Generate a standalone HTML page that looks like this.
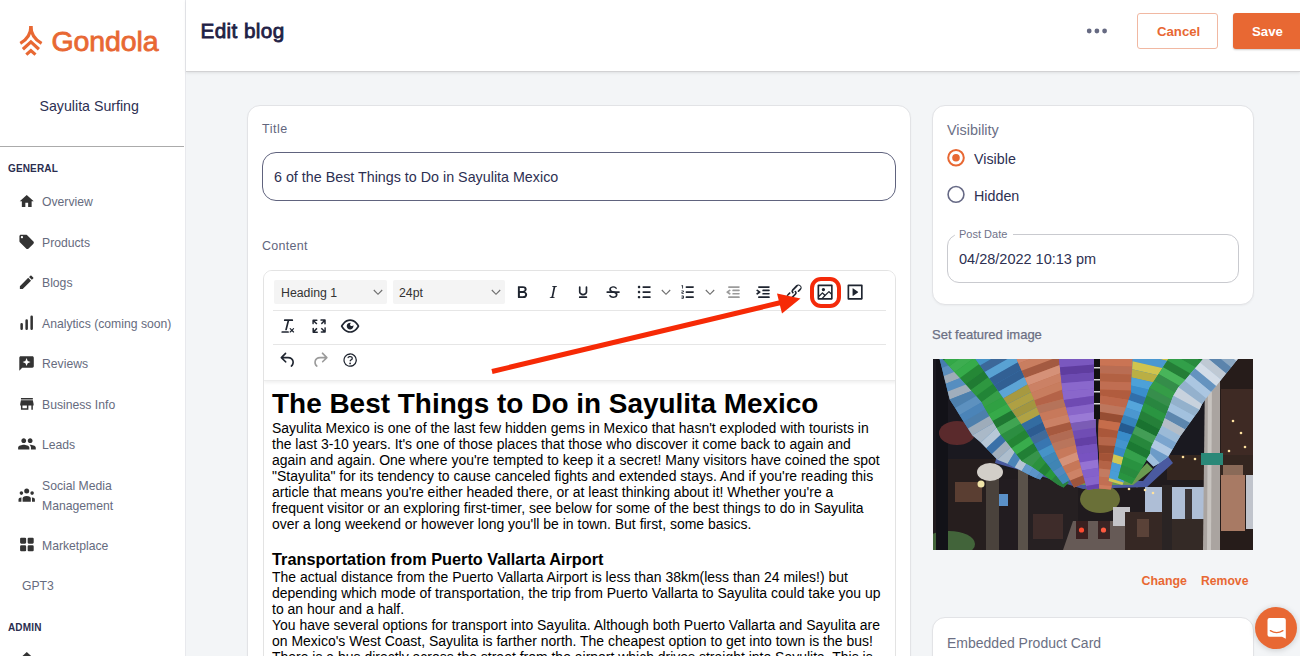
<!DOCTYPE html>
<html><head><meta charset="utf-8">
<style>
*{box-sizing:border-box;margin:0;padding:0}
html,body{width:1300px;height:656px;overflow:hidden;background:#f3f5f7;font-family:"Liberation Sans",sans-serif}
.abs{position:absolute}
#sidebar{position:absolute;left:0;top:0;width:186px;height:656px;background:#fff;border-right:1px solid #e8e9ed}
#header{position:absolute;left:186px;top:0;width:1114px;height:72px;background:#fff;border-bottom:1px solid #d2d2d4;box-shadow:0 1px 3px rgba(0,0,0,0.09)}
.t{position:absolute;white-space:nowrap;line-height:1}
.nav{color:#666b7e;font-size:12.2px}
.ico{position:absolute;fill:#333}
.card{position:absolute;background:#fff;border:1px solid #e2e3e6;border-radius:13px;box-shadow:0 1px 2px rgba(0,0,0,0.04)}
</style></head><body>
<div id="sidebar">
  <!-- logo -->
  <svg class="abs" style="left:19px;top:25px" width="25" height="32" viewBox="0 0 25 32">
    <g fill="none" stroke="#e86833" stroke-width="3.2" stroke-linecap="butt">
      <path d="M11.9 1 C11.9 9.5 8.2 14.5 1.3 18.4"/>
      <path d="M11.9 1 C11.9 9.5 15.6 14.5 22.6 18.4"/>
      <path d="M3.9 24.2 L11.9 16.9 L19.9 24.2"/>
      <path d="M7.3 29.6 L11.9 25.6 L16.5 29.6"/>
    </g>
  </svg>
  <div class="t" style="left:51.5px;top:27px;font-size:28.5px;color:#e86833;-webkit-text-stroke:0.8px #e86833;letter-spacing:-0.1px">Gondola</div>
  <div class="t" style="left:39.5px;top:99px;font-size:14.2px;color:#2d3052">Sayulita Surfing</div>
  <div class="abs" style="left:0;top:146px;width:184px;height:1px;background:#ababab"></div>
  <div class="t" style="left:8px;top:164px;font-size:10px;font-weight:700;color:#2a2d4f;letter-spacing:0.15px">GENERAL</div>
  <svg class="abs" style="left:0;top:0" width="186" height="656" fill="#333">
<path transform="translate(18.34 192.94) scale(0.700)" d="M10 20v-6h4v6h5v-8h3L12 3 2 12h3v8z"/>
<path transform="translate(17.98 233.23) scale(0.722)" d="M21.41 11.58l-9-9C12.05 2.22 11.55 2 11 2H4c-1.1 0-2 .9-2 2v7c0 .55.22 1.05.59 1.42l9 9c.36.36.86.58 1.41.58.55 0 1.05-.22 1.41-.59l7-7c.37-.36.59-.86.59-1.41 0-.55-.23-1.06-.59-1.42zM5.5 7C4.670 7 4 6.330 4 5.500S4.670 4 5.500 4 7 4.670 7 5.500 6.330 7 5.500 7z"/>
<path transform="translate(17.62 273.17) scale(0.753)" d="M3 17.25V21h3.75L17.81 9.94l-3.75-3.75L3 17.25zM20.71 7.04c.39-.39.39-1.02 0-1.41l-2.34-2.34c-.39-.39-1.02-.39-1.41 0l-1.83 1.830 3.750 3.750 1.830-1.830z"/>
<path transform="translate(17.05 312.11) scale(0.835)" d="M4 14.5a1.5 1.5 0 013 0V20a1.5 1.5 0 01-3 0zM10 10a1.5 1.5 0 013 0V20a1.5 1.5 0 01-3 0zM16 5.5a1.5 1.5 0 013 0V20a1.5 1.5 0 01-3 0z"/>
<path transform="translate(17.85 354.75) scale(0.725)" d="M20 2H4c-1.1 0-1.99.9-1.99 2L2 22l4-4h14c1.1 0 2-.9 2-2V4c0-1.1-.9-2-2-2zM12 4.6l1.6 3.9 3.9 1.6-3.9 1.6L12 15.6l-1.6-3.9-3.9-1.6 3.9-1.6z"/>
<path transform="translate(17.97 394.97) scale(0.744)" d="M20 4H4v2h16V4zm1 10v-2l-1-5H4l-1 5v2h1v6h10v-6h4v6h2v-6h1zm-9 4H6v-4h6v4z"/>
<path transform="translate(17.33 434.23) scale(0.802)" d="M16 11c1.66 0 2.99-1.34 2.99-3S17.66 5 16 5c-1.66 0-3 1.34-3 3s1.34 3 3 3zm-8 0c1.66 0 2.99-1.34 2.99-3S9.66 5 8 5C6.34 5 5 6.34 5 8s1.34 3 3 3zm0 2c-2.33 0-7 1.17-7 3.5V19h14v-2.5c0-2.33-4.67-3.5-7-3.5zm8 0c-.29 0-.62.02-.97.05 1.16.84 1.97 1.97 1.97 3.45V19h6v-2.5c0-2.33-4.67-3.5-7-3.5z"/>
<g><circle cx="26.7" cy="490.9" r="2.5"/><circle cx="21.4" cy="493.1" r="1.8"/><circle cx="32.1" cy="493.1" r="1.8"/>
<path d="M22.6 501.7 V498.6 Q22.6 496 26.7 496 Q30.8 496 30.8 498.6 V501.7 Z"/>
<path d="M18.5 501.7 V499.6 Q18.5 497.4 21.2 497.4 L21.6 497.5 Q21.4 498 21.4 498.8 V501.7 Z"/>
<path d="M34.9 501.7 V499.6 Q34.9 497.4 32.2 497.4 L31.8 497.5 Q32 498 32 498.8 V501.7 Z"/></g>
<path transform="translate(17.83 535.43) scale(0.756)" d="M4.5 3h5A1.5 1.5 0 0111 4.5v5A1.5 1.5 0 019.5 11h-5A1.5 1.5 0 013 9.5v-5A1.5 1.5 0 014.5 3zm10 0h5A1.5 1.5 0 0121 4.5v5a1.5 1.5 0 01-1.5 1.5h-5A1.5 1.5 0 0113 9.5v-5A1.5 1.5 0 0114.5 3zm-10 10h5a1.5 1.5 0 011.5 1.5v5A1.5 1.5 0 019.5 21h-5A1.5 1.5 0 013 19.5v-5A1.5 1.5 0 014.5 13zm10 0h5a1.5 1.5 0 011.5 1.5v5a1.5 1.5 0 01-1.5 1.5h-5a1.5 1.5 0 01-1.5-1.5v-5a1.5 1.5 0 011.5-1.5z"/>
<path transform="translate(18.4 650) scale(0.7)" d="M10 20v-6h4v6h5v-8h3L12 3 2 12h3v8z"/>
</svg>
  <div class="t nav" style="left:42px;top:196px">Overview</div>
  <div class="t nav" style="left:42px;top:237px">Products</div>
  <div class="t nav" style="left:42px;top:277px">Blogs</div>
  <div class="t nav" style="left:42px;top:318px">Analytics (coming soon)</div>
  <div class="t nav" style="left:42px;top:358px">Reviews</div>
  <div class="t nav" style="left:42px;top:399px">Business Info</div>
  <div class="t nav" style="left:42px;top:439px">Leads</div>
  <div class="t nav" style="left:42px;top:480px">Social Media</div>
  <div class="t nav" style="left:42px;top:500px">Management</div>
  <div class="t nav" style="left:42px;top:540px">Marketplace</div>
  <div class="t nav" style="left:22px;top:580px">GPT3</div>
  <div class="t" style="left:8px;top:622.5px;font-size:10px;font-weight:700;color:#2a2d4f;letter-spacing:0.15px">ADMIN</div>
</div>
<div id="header">
  <div class="t" style="left:14.5px;top:20.8px;font-size:20.7px;font-weight:400;color:#1f2145;-webkit-text-stroke:0.8px #1f2145;letter-spacing:0.4px">Edit blog</div>
  <svg class="abs" style="left:900px;top:26px" width="22" height="10"><circle cx="3.2" cy="5" r="2.4" fill="#666a82"/><circle cx="10.9" cy="5" r="2.4" fill="#666a82"/><circle cx="18.6" cy="5" r="2.4" fill="#666a82"/></svg>
  <div class="abs" style="left:951px;top:13px;width:81px;height:36px;border:1px solid #f1b8a2;border-radius:3px;background:#fff"></div>
  <div class="t" style="left:971px;top:25px;font-size:13.2px;font-weight:700;color:#e86833">Cancel</div>
  <div class="abs" style="left:1047px;top:13px;width:80px;height:36px;border-radius:3px;background:#e86833;box-shadow:0 1px 2px rgba(0,0,0,.2)"></div>
  <div class="t" style="left:1066px;top:25px;font-size:13.2px;font-weight:700;color:#fff">Save</div>
</div>

<!-- main card -->
<div class="card" style="left:247px;top:105px;width:664px;height:600px"></div>
<div class="t" style="left:262px;top:123px;font-size:12.5px;color:#62667e;letter-spacing:0.5px">Title</div>
<div class="abs" style="left:262px;top:152.4px;width:634px;height:48.8px;border:1.5px solid #60637e;border-radius:14px"></div>
<div class="t" style="left:274px;top:170px;font-size:14.3px;color:#2d3052">6 of the Best Things to Do in Sayulita Mexico</div>
<div class="t" style="left:262px;top:240px;font-size:12.5px;color:#62667e;letter-spacing:0.3px">Content</div>

<!-- right card -->
<div class="card" style="left:932px;top:105px;width:322px;height:199.5px"></div>
<div class="t" style="left:947px;top:122.9px;font-size:14.4px;color:#6b6f86">Visibility</div>

<!-- editor -->
<div class="abs" style="left:263px;top:270px;width:633px;height:420px;border:1px solid #e3e3e3;border-radius:9px;background:#fff;overflow:hidden">
  <div class="abs" style="left:0;top:0;width:633px;height:110px;background:#fff;box-shadow:0 2px 3px rgba(0,0,0,0.06);border-bottom:1px solid #ececec"></div>
  <div class="abs" style="left:9px;top:39px;width:613px;height:1px;background:#e6e6e6"></div>
  <div class="abs" style="left:9px;top:73px;width:613px;height:1px;background:#e6e6e6"></div>
</div>
<div class="abs" style="left:274px;top:280px;width:113px;height:24px;background:#f4f4f4;border-radius:2px"></div>
<div class="t" style="left:281px;top:287.3px;font-size:12.3px;color:#333">Heading 1</div>
<svg class="abs" style="left:372.5px;top:289.2px" width="10" height="7" viewBox="0 0 10 7"><polyline points="0.8,1 5,5.3 9.2,1" fill="none" stroke="#6e6e6e" stroke-width="1.15"/></svg>
<div class="abs" style="left:393px;top:280px;width:112px;height:24px;background:#f4f4f4;border-radius:2px"></div>
<div class="t" style="left:399px;top:287.3px;font-size:12.3px;color:#333">24pt</div>
<svg class="abs" style="left:490.5px;top:289.2px" width="10" height="7" viewBox="0 0 10 7"><polyline points="0.8,1 5,5.3 9.2,1" fill="none" stroke="#6e6e6e" stroke-width="1.15"/></svg>
<svg class="abs" style="left:511.5px;top:282.2px" width="20.2" height="20.2" viewBox="0 0 24 24" fill="#1f2530"><path d="M7.8 19c-.3 0-.5 0-.6-.2l-.2-.5V5.7c0-.2 0-.4.2-.5l.6-.2h5c1.5 0 2.7.3 3.5 1 .7.6 1.100 1.4 1.1 2.5a3 3 0 01-.6 1.9c-.4.6-1 1-1.6 1.2.4.1.9.3 1.3.6s.8.7 1 1.2c.4.4.5 1 .5 1.6 0 1.3-.4 2.3-1.3 3-.8.7-2.1 1-3.800 1H7.8zm5-8.3c.6 0 1.2-.1 1.6-.5.4-.3.6-.7.6-1.3 0-1.100-.8-1.700-2.3-1.700H9.3v3.5h3.4zm.5 6c.7 0 1.3-.1 1.7-.4.4-.4.6-.9.6-1.5s-.2-1-.7-1.4c-.4-.3-1-.4-2-.4H9.4v3.8h4z" fill-rule="evenodd"/></svg>
<svg class="abs" style="left:542.7px;top:282.2px" width="20.2" height="20.2" viewBox="0 0 24 24" fill="#1f2530"><path d="M16.7 4.7l-.1.9h-.3c-.6 0-1 0-1.4.3-.3.3-.4.6-.5 1.1l-2.1 9.8v.6c0 .5.4.8 1.4.8h.2l-.2.8H8l.2-.8h.2c1.1 0 1.8-.5 2-1.5l2-9.8.1-.5c0-.6-.4-.8-1.4-.8h-.3l.2-.9h5.8z" fill-rule="evenodd"/></svg>
<svg class="abs" style="left:572.6px;top:282.2px" width="20.2" height="20.2" viewBox="0 0 24 24" fill="#1f2530"><path d="M16 5c.6 0 1 .4 1 1v5.5a4 4 0 01-.4 1.800l-1 1.4a5.300 5.300 0 01-5.500 1 5 5 0 01-1.600-1c-.5-.4-.8-.9-1.100-1.400a4 4 0 01-.4-1.800V6c0-.6.4-1 1-1s1 .4 1 1v5.500c0 .3 0 .6.2 1l.6.7a3.300 3.300 0 002.200.8 3.400 3.400 0 002.200-.8c.3-.2.4-.5.6-.8l.2-.9V6c0-.6.4-1 1-1zM8 17h8c.6 0 1 .4 1 1s-.4 1-1 1H8a1 1 0 010-2z" fill-rule="evenodd"/></svg>
<svg class="abs" style="left:602.6px;top:282.2px" width="20.2" height="20.2" viewBox="0 0 24 24" fill="#1f2530"><g fill-rule="evenodd"><path d="M15.6 8.5c-.5-.7-1-1.1-1.3-1.3-.6-.4-1.3-.6-2-.6-2.7 0-2.8 1.7-2.8 2.1 0 1.6 1.8 2 3.2 2.3 4.4.9 4.6 2.8 4.600 3.900 0 1.400-.7 4.100-5 4.100A6.200 6.200 0 017 16.400l1.500-1.100c.4.6 1.600 2 3.500 2 1.500 0 2.600-.4 3-1.200.4-.8.3-1.900-.8-2.500-.7-.4-1.600-.7-2.900-1-1-.2-3.900-.8-3.900-3.600C7.400 6 10.300 5 12.400 5c2.900 0 4 2 4.200 2.400l-1 1.100z"/><path d="M5 11h14a1 1 0 010 2H5a1 1 0 010-2z"/></g></svg>
<svg class="abs" style="left:633.9px;top:282.2px" width="20.2" height="20.2" viewBox="0 0 24 24" fill="#1f2530"><path d="M11 5h8c.6 0 1 .4 1 1s-.4 1-1 1h-8a1 1 0 010-2zm0 6h8c.6 0 1 .4 1 1s-.4 1-1 1h-8a1 1 0 010-2zm0 6h8c.6 0 1 .4 1 1s-.4 1-1 1h-8a1 1 0 010-2zM4.500 6c0-.4.1-.8.4-1 .3-.4.7-.5 1.100-.5.4 0 .8.1 1 .4.4.3.5.7.5 1.100 0 .4-.1.8-.4 1-.3.4-.7.5-1.100.5-.4 0-.8-.1-1-.4-.4-.3-.5-.7-.5-1.100zm0 6c0-.4.1-.8.4-1 .3-.4.7-.5 1.100-.5.4 0 .8.1 1 .4.4.3.5.7.5 1.100 0 .4-.1.8-.4 1-.3.4-.7.5-1.100.5-.4 0-.8-.1-1-.4-.4-.3-.5-.7-.5-1.100zm0 6c0-.4.1-.8.4-1 .3-.4.7-.5 1.100-.5.4 0 .8.1 1 .4.4.3.5.7.5 1.100 0 .4-.1.8-.4 1-.3.4-.7.5-1.100.5-.4 0-.8-.1-1-.4-.4-.3-.5-.7-.5-1.100z" fill-rule="evenodd"/></svg>
<svg class="abs" style="left:677.6px;top:282.2px" width="20.2" height="20.2" viewBox="0 0 24 24" fill="#1f2530"><path d="M10 17h8c.6 0 1 .4 1 1s-.4 1-1 1h-8a1 1 0 010-2zm0-6h8c.6 0 1 .4 1 1s-.4 1-1 1h-8a1 1 0 010-2zm0-6h8c.6 0 1 .4 1 1s-.4 1-1 1h-8a1 1 0 110-2zM6 4v3.500c0 .3-.2.5-.5.5a.5.5 0 01-.5-.5V5h-.5a.5.5 0 010-1H6zm-1 8.800l.2.2h1.300c.3 0 .5.2.5.5s-.2.5-.5.5H4.900a1 1 0 01-.9-1V13c0-.4.3-.8.6-1l1.200-.4.2-.3a.2.2 0 00-.2-.2H4.500a.5.5 0 01-.5-.5c0-.3.2-.5.5-.5h1.600c.5 0 .9.4.9 1v.1c0 .4-.3.8-.6 1l-1.200.4-.2.3zM7 17v2c0 .6-.4 1-1 1H4.500a.5.5 0 010-1h1.200c.2 0 .3-.1.3-.3 0-.2-.1-.3-.3-.3H4.400a.4.4 0 110-.8h1.300c.2 0 .3-.1.3-.3 0-.2-.1-.3-.3-.3H4.500a.5.5 0 110-1H6c.6 0 1 .4 1 1z" fill-rule="evenodd"/></svg>
<svg class="abs" style="left:722.9px;top:282.2px" width="20.2" height="20.2" viewBox="0 0 24 24" fill="#9b9b9b"><path d="M7 5h12c.6 0 1 .4 1 1s-.4 1-1 1H7a1 1 0 110-2zm5 4h7c.6 0 1 .4 1 1s-.4 1-1 1h-7a1 1 0 010-2zm0 4h7c.6 0 1 .4 1 1s-.4 1-1 1h-7a1 1 0 010-2zm-5 4h12a1 1 0 010 2H7a1 1 0 010-2zm1.600-3.800a1 1 0 01-1.200 1.600l-3-2a1 1 0 010-1.600l3-2a1 1 0 011.200 1.600L6.800 12l1.800 1.200z" fill-rule="evenodd"/></svg>
<svg class="abs" style="left:753.1px;top:282.2px" width="20.2" height="20.2" viewBox="0 0 24 24" fill="#1f2530"><path d="M7 5h12c.6 0 1 .4 1 1s-.4 1-1 1H7a1 1 0 110-2zm5 4h7c.6 0 1 .4 1 1s-.4 1-1 1h-7a1 1 0 010-2zm0 4h7c.6 0 1 .4 1 1s-.4 1-1 1h-7a1 1 0 010-2zm-5 4h12a1 1 0 010 2H7a1 1 0 010-2zm-2.600-3.800L6.200 12l-1.800-1.200a1 1 0 011.200-1.600l3 2a1 1 0 010 1.600l-3 2a1 1 0 11-1.200-1.600z" fill-rule="evenodd"/></svg>
<svg class="abs" style="left:783.9px;top:282.2px" width="20.2" height="20.2" viewBox="0 0 24 24" fill="#1f2530"><path d="M6.200 12.300a1 1 0 011.400 1.400l-2 2a2 2 0 102.600 2.800l4.800-4.800a1 1 0 000-1.400 1 1 0 111.400-1.300 2.900 2.900 0 010 4L9.600 20a3.900 3.900 0 01-5.500-5.500l2-2zm11.600-.6a1 1 0 01-1.400-1.400l2-2a2 2 0 10-2.600-2.800L11 10.300a1 1 0 000 1.400A1 1 0 119.600 13a2.900 2.900 0 010-4L14.400 4a3.900 3.900 0 015.500 5.500l-2 2z" fill-rule="nonzero"/></svg>
<svg class="abs" style="left:814.6px;top:282.2px" width="20.2" height="20.2" viewBox="0 0 24 24" fill="#1f2530"><path d="M5 15.700l3.300-3.200c.3-.3.7-.3 1 0L12 15l4.100-4c.3-.4.8-.4 1 0l2 1.900V5H5v10.700zM5 18V19h3l2.800-2.900-2-2L5 17.900zm14-3l-2.500-2.400-6.400 6.500H19v-4zM4 3h16c.6 0 1 .4 1 1v16c0 .6-.4 1-1 1H4a1 1 0 01-1-1V4c0-.6.4-1 1-1zm6 8a2 2 0 100-4 2 2 0 000 4z" fill-rule="nonzero"/></svg>
<svg class="abs" style="left:844.9px;top:282.2px" width="20.2" height="20.2" viewBox="0 0 24 24" fill="#1f2530"><path d="M4 3h16c.6 0 1 .4 1 1v16c0 .6-.4 1-1 1H4a1 1 0 01-1-1V4c0-.6.4-1 1-1zm1 2v14h14V5H5zm4.800 2.600l5.600 4a.5.5 0 010 .8l-5.600 4A.5.5 0 019 16V8a.5.5 0 01.8-.4z" fill-rule="nonzero"/></svg>
<svg class="abs" style="left:660.7px;top:289.2px" width="10" height="7" viewBox="0 0 10 7"><polyline points="0.8,1 5,5.3 9.2,1" fill="none" stroke="#6e6e6e" stroke-width="1.15"/></svg>
<svg class="abs" style="left:705.3px;top:289.2px" width="10" height="7" viewBox="0 0 10 7"><polyline points="0.8,1 5,5.3 9.2,1" fill="none" stroke="#6e6e6e" stroke-width="1.15"/></svg>
<svg class="abs" style="left:278.4px;top:316.1px" width="20.2" height="20.2" viewBox="0 0 24 24" fill="#1f2530"><path d="M13.200 6a1 1 0 010 .2l-2.600 10a1 1 0 01-1 .8h-.2a.8.8 0 01-.8-1l2.600-10H8a1 1 0 110-2h9a1 1 0 010 2h-3.800zM5 18h7a1 1 0 010 2H5a1 1 0 010-2zm13 1.500L16.500 18 15 19.500a.7.7 0 01-1-1l1.500-1.500-1.500-1.500a.7.7 0 011-1l1.500 1.500 1.500-1.500a.7.7 0 011 1L17.500 17l1.500 1.500a.7.7 0 01-1 1z" fill-rule="evenodd"/></svg>
<svg class="abs" style="left:309.4px;top:316.1px" width="20.2" height="20.2" viewBox="0 0 24 24" fill="#1f2530"><path d="M15.300 10l-1.200-1.300 2.900-3h-2.300a.9.9 0 110-1.700H19c.5 0 .9.4.9.9v4.400a.9.9 0 11-1.800 0V7l-2.900 3zm0 4l3 3v-2.300a.9.9 0 111.700 0V19c0 .5-.4.9-.9.9h-4.400a.9.9 0 110-1.800H17l-3-2.900 1.300-1.200zM10 15.400l-2.900 3h2.300a.9.9 0 110 1.700H5a.9.9 0 01-.9-.9v-4.400a.9.9 0 111.800 0V17l2.900-3 1.200 1.300zM8.700 10L5.700 7v2.300a.9.9 0 01-1.700 0V5c0-.5.4-.9.9-.9h4.400a.9.9 0 010 1.800H7l3 2.900-1.300 1.200z" fill-rule="nonzero"/></svg>
<svg class="abs" style="left:340.0px;top:316.1px" width="20.2" height="20.2" viewBox="0 0 24 24" fill="#1f2530"><path d="M3.500 12.500c.5.8 1.100 1.600 1.800 2.300 2 2 4.200 3.200 6.700 3.200s4.700-1.200 6.700-3.200a16.200 16.200 0 002.100-2.800 15.700 15.700 0 00-2.100-2.800c-2-2-4.200-3.200-6.700-3.200S7.300 7.200 5.300 9.200A16.200 16.200 0 003.200 12c.1.2.2.3.3.5zm-2.400-1l.7-1.200L4 7.800C6.200 5.400 8.900 4 12 4c3 0 5.800 1.400 8.100 3.800a18.200 18.200 0 012.800 3.700v1l-.7 1.200-2.100 2.500c-2.300 2.400-5 3.800-8.100 3.800-3 0-5.800-1.400-8.100-3.800a18.200 18.200 0 01-2.800-3.700 1 1 0 010-1zm12-3.300a2 2 0 102.700 2.600 4 4 0 11-2.600-2.600z" fill-rule="nonzero"/></svg>
<svg class="abs" style="left:277.9px;top:350.1px" width="20.2" height="20.2" viewBox="0 0 24 24" fill="#1f2530"><path d="M6.400 8H12c3.700 0 6.200 2 6.800 5.100.6 2.700-.4 5.600-2.300 6.800a1 1 0 01-1-1.800c1.100-.6 1.800-2.700 1.400-4.600-.5-2.100-2.100-3.500-4.900-3.500H6.400l3.300 3.300a1 1 0 11-1.400 1.400l-5-5a1 1 0 010-1.400l5-5a1 1 0 011.400 1.400L6.400 8z" fill-rule="nonzero"/></svg>
<svg class="abs" style="left:310.1px;top:350.1px" width="20.2" height="20.2" viewBox="0 0 24 24" fill="#9b9b9b"><path d="M17.600 10H12c-2.800 0-4.400 1.400-4.900 3.500-.4 2 .3 4 1.400 4.600a1 1 0 11-1 1.800c-2-1.200-2.900-4.100-2.300-6.800.6-3 3-5.100 6.800-5.100h5.600l-3.300-3.300a1 1 0 111.400-1.400l5 5a1 1 0 010 1.400l-5 5a1 1 0 01-1.400-1.400l3.300-3.300z" fill-rule="nonzero"/></svg>
<svg class="abs" style="left:340.1px;top:350.1px" width="20.2" height="20.2" viewBox="0 0 24 24" fill="#1f2530"><g fill-rule="evenodd"><path d="M12 5.500a6.500 6.500 0 00-6 9 6.300 6.300 0 001.400 2l1 1a6.300 6.300 0 003.600 1 6.500 6.500 0 006-9 6.300 6.300 0 00-1.400-2l-1-1a6.300 6.300 0 00-3.600-1zM12 4a7.800 7.800 0 015.700 2.300A8 8 0 1112 4z"/><path d="M9.600 9.700a.7.7 0 01-.7-.8c0-1.100 1.500-1.800 3.200-1.800 1.800 0 3.200.8 3.200 2.400 0 1.400-.4 2.100-1.500 2.800-.2 0-.3.1-.3.2a2 2 0 00-.8.8.8.8 0 01-1.400-.6c.3-.7.8-1 1.300-1.500l.4-.2c.7-.4.8-.6.8-1.500 0-.5-.6-.9-1.700-.9-.5 0-1 .1-1.400.3-.2 0-.3.1-.3.2v-.2c0 .4-.4.8-.8.8z" fill-rule="nonzero"/><circle cx="12" cy="16" r="1"/></g></svg>
<!--EDITOR_END-->
<div class="abs" style="left:0;top:0;width:1300px;height:656px;overflow:hidden;pointer-events:none">
<div class="t" style="left:272px;top:390.2px;font-size:27.95px;font-weight:700;color:#000">The Best Things to Do in Sayulita Mexico</div>
<div class="t" style="left:272px;top:421.2px;font-size:13.98px;color:#000">Sayulita Mexico is one of the last few hidden gems in Mexico that hasn&#x27;t exploded with tourists in</div>
<div class="t" style="left:272px;top:437.2px;font-size:13.98px;color:#000">the last 3-10 years. It&#x27;s one of those places that those who discover it come back to again and</div>
<div class="t" style="left:272px;top:453.2px;font-size:13.98px;color:#000">again and again. One where you&#x27;re tempted to keep it a secret! Many visitors have coined the spot</div>
<div class="t" style="left:272px;top:469.2px;font-size:13.98px;color:#000">&quot;Stayulita&quot; for its tendency to cause canceled fights and extended stays. And if you&#x27;re reading this</div>
<div class="t" style="left:272px;top:485.2px;font-size:13.98px;color:#000">article that means you&#x27;re either headed there, or at least thinking about it! Whether you&#x27;re a</div>
<div class="t" style="left:272px;top:501.2px;font-size:13.98px;color:#000">frequent visitor or an exploring first-timer, see below for some of the best things to do in Sayulita</div>
<div class="t" style="left:272px;top:517.2px;font-size:13.98px;color:#000">over a long weekend or however long you&#x27;ll be in town. But first, some basics.</div>
<div class="t" style="left:272px;top:550.5px;font-size:16.3px;font-weight:700;color:#000">Transportation from Puerto Vallarta Airport</div>
<div class="t" style="left:272px;top:569.7px;font-size:13.98px;color:#000">The actual distance from the Puerto Vallarta Airport is less than 38km(less than 24 miles!) but</div>
<div class="t" style="left:272px;top:585.7px;font-size:13.98px;color:#000">depending which mode of transportation, the trip from Puerto Vallarta to Sayulita could take you up</div>
<div class="t" style="left:272px;top:601.7px;font-size:13.98px;color:#000">to an hour and a half.</div>
<div class="t" style="left:272px;top:617.7px;font-size:13.98px;color:#000">You have several options for transport into Sayulita. Although both Puerto Vallarta and Sayulita are</div>
<div class="t" style="left:272px;top:633.7px;font-size:13.98px;color:#000">on Mexico&#x27;s West Coast, Sayulita is farther north. The cheapest option to get into town is the bus!</div>
<div class="t" style="left:272px;top:649.7px;font-size:13.98px;color:#000">There is a bus directly across the street from the airport which drives straight into Sayulita. This is</div>
</div>
<!--CONTENT_END-->

<!-- right panel -->
<svg class="abs" style="left:945px;top:147px" width="22" height="60">
  <circle cx="11" cy="10.8" r="7.8" fill="#fff" stroke="#e86833" stroke-width="2"/>
  <circle cx="11" cy="10.8" r="3.8" fill="#e86833"/>
  <circle cx="11" cy="47.4" r="7.9" fill="#fff" stroke="#666985" stroke-width="1.6"/>
</svg>
<div class="t" style="left:974px;top:151.8px;font-size:14.3px;color:#2d3052">Visible</div>
<div class="t" style="left:974px;top:188.6px;font-size:14.3px;color:#2d3052">Hidden</div>
<div class="abs" style="left:947px;top:234px;width:292px;height:49px;border:1px solid #c9cacf;border-radius:12px"></div>
<div class="abs" style="left:955px;top:230px;width:58px;height:8px;background:#fff"></div>
<div class="t" style="left:959px;top:229px;font-size:11px;color:#70738a">Post Date</div>
<div class="t" style="left:959px;top:252px;font-size:14.5px;color:#2d3052">04/28/2022 10:13 pm</div>
<div class="t" style="left:932px;top:328.4px;font-size:13px;color:#6b6f83;-webkit-text-stroke:0.25px #6b6f83">Set featured image</div>
<svg class="abs" style="left:933px;top:359px;overflow:hidden" width="320" height="191" viewBox="0 0 320 191">
<rect width="320" height="191" fill="#201b1e"/>
<rect x="0" y="0" width="320" height="110" fill="#1a1920"/>
<!-- right building -->
<rect x="284" y="0" width="36" height="191" fill="#261c1a"/>
<rect x="288" y="30" width="32" height="86" fill="#3e2a24"/>
<rect x="234" y="96" width="86" height="25" fill="#342620"/>
<rect x="288" y="116" width="24" height="56" fill="#a87a64"/>
<rect x="290" y="106" width="20" height="10" fill="#8a6a58"/>
<rect x="313" y="116" width="7" height="54" fill="#c0c4cc"/>
<!-- storefront -->
<rect x="212" y="128" width="59" height="37" fill="#aebed6"/>
<rect x="229" y="126" width="10" height="65" fill="#2a2424"/>
<rect x="252" y="130" width="7" height="35" fill="#3a3436"/>
<!-- left buildings -->
<rect x="15" y="100" width="50" height="91" fill="#261e1e"/>
<rect x="22" y="123" width="27" height="20" fill="#5a3e32"/>
<rect x="66" y="120" width="20" height="71" fill="#221c20"/>
<rect x="66" y="135" width="9" height="12" fill="#5a90c8"/>
<rect x="95" y="120" width="50" height="71" fill="#262022"/>
<rect x="100" y="155" width="30" height="25" fill="#3e2c2a"/>
<!-- far trees -->
<ellipse cx="167" cy="140" rx="20" ry="14" fill="#6a7038"/>
<!-- street -->
<polygon points="130,191 200,191 194,162 140,162" fill="#665a56"/>
<rect x="180" y="148" width="17" height="19" fill="#c4c4c8"/>
<rect x="143" y="162" width="12" height="18" fill="#3a2020"/>
<circle cx="148.5" cy="171" r="2.6" fill="#ff4a30"/>
<rect x="165" y="162" width="12" height="18" fill="#3a2424"/>
<circle cx="170.5" cy="171" r="2.6" fill="#ff5a40"/>
<!-- people -->
<rect x="192" y="153" width="37" height="38" fill="#362824"/>
<rect x="239" y="160" width="32" height="31" fill="#342a26"/>
<rect x="204" y="160" width="12" height="18" fill="#5a4238"/>
<!-- plants -->
<ellipse cx="16" cy="185" rx="26" ry="13" fill="#42643a"/>
<!-- trunks -->
<rect x="3" y="0" width="12" height="191" fill="#121218"/>
<rect x="53" y="118" width="13" height="73" fill="#4a423c"/>
<rect x="85" y="106" width="10" height="85" fill="#5a524a"/>
<path d="M272 14 L287 14 L287 191 L270 191 Z" fill="#aaa4a0"/>
<path d="M275 14 L279 14 L278 191 L274 191 Z" fill="#c8c4c0"/>
<rect x="268" y="94" width="22" height="12" fill="#2a8878"/>
<!-- turtle sign & lamp -->
<ellipse cx="57" cy="113" rx="13" ry="9" fill="#d2cec8"/>
<circle cx="48" cy="125" r="3.5" fill="#f0e4a8"/>
<!-- lights -->
<g fill="#ffe2a0"><circle cx="196" cy="130" r="1.3"/><circle cx="204" cy="127" r="1.3"/><circle cx="212" cy="131" r="1.3"/><circle cx="220" cy="134" r="1.3"/><circle cx="300" cy="62" r="1.3"/><circle cx="308" cy="74" r="1.3"/><circle cx="312" cy="88" r="1.3"/><circle cx="296" cy="92" r="1.3"/><circle cx="262" cy="100" r="1.3"/><circle cx="250" cy="98" r="1.3"/></g>
<!-- maroon turtle top-left -->
<ellipse cx="24" cy="74" rx="18" ry="12" fill="#5a2a2c"/>
<!-- lower garland ends -->
<polygon points="64,96 110,106 150,122 210,122 222,108 234,96 240,104 214,128 150,130 104,116 62,104" fill="#4a5aa0"/>
<polygon points="110,100 150,116 200,118 214,104 220,110 200,126 150,126 108,110" fill="#6a9a50"/>
<polygon points="1.0,-22.2 3.0,-14.4 4.9,-6.5 6.9,1.3 8.9,9.1 10.8,16.9 12.8,24.8 14.7,32.6 16.7,40.4 22.2,49.1 26.5,55.9 30.7,62.7 35.0,69.4 39.3,76.2 47.8,83.4 53.3,89.2 58.9,95.0 64.4,100.7 74.6,104.7 81.7,108.4 88.8,112.1 95.9,115.8 102.8,119.1 107.2,120.4 110.8,115.6 108.3,111.8 102.1,105.7 95.6,101.1 89.1,96.4 82.6,91.8 80.4,85.7 75.0,79.8 69.6,73.9 64.2,68.0 62.9,62.7 59.2,55.6 55.5,48.5 51.8,41.4 48.2,34.3 46.4,28.8 42.5,21.7 38.7,14.6 34.8,7.5 30.9,0.5 27.0,-6.6 23.1,-13.7 19.3,-20.7 15.4,-27.8" fill="#4a84b8"/><polygon points="1.0,-22.2 15.4,-27.8 19.3,-20.7 3.0,-14.4" fill="#4e7fb1"/><polygon points="3.0,-14.4 19.3,-20.7 23.1,-13.7 4.9,-6.5" fill="#5e96c9"/><polygon points="4.9,-6.5 23.1,-13.7 27.0,-6.6 6.9,1.3" fill="#568cbd"/><polygon points="6.9,1.3 27.0,-6.6 30.9,0.5 8.9,9.1" fill="#467dae"/><polygon points="8.9,9.1 30.9,0.5 34.8,7.5 10.8,16.9" fill="#5b8fbe"/><polygon points="10.8,16.9 34.8,7.5 38.7,14.6 12.8,24.8" fill="#9eacb9"/><polygon points="12.8,24.8 38.7,14.6 42.5,21.7 14.7,32.6" fill="#568ec0"/><polygon points="14.7,32.6 42.5,21.7 46.4,28.8 16.7,40.4" fill="#a0aebc"/><polygon points="16.7,40.4 46.4,28.8 48.2,34.3 22.2,49.1" fill="#4d80ad"/><polygon points="22.2,49.1 48.2,34.3 51.8,41.4 26.5,55.9" fill="#5d91bf"/><polygon points="26.5,55.9 51.8,41.4 55.5,48.5 30.7,62.7" fill="#4b84b8"/><polygon points="30.7,62.7 55.5,48.5 59.2,55.6 35.0,69.4" fill="#4d7fac"/><polygon points="35.0,69.4 59.2,55.6 62.9,62.7 39.3,76.2" fill="#9eacba"/><polygon points="39.3,76.2 62.9,62.7 64.2,68.0 47.8,83.4" fill="#aab9c8"/><polygon points="47.8,83.4 64.2,68.0 69.6,73.9 53.3,89.2" fill="#b7c7d7"/><polygon points="53.3,89.2 69.6,73.9 75.0,79.8 58.9,95.0" fill="#3a70a8"/><polygon points="58.9,95.0 75.0,79.8 80.4,85.7 64.4,100.7" fill="#a1afbd"/><polygon points="64.4,100.7 80.4,85.7 82.6,91.8 74.6,104.7" fill="#aebecd"/><polygon points="74.6,104.7 82.6,91.8 89.1,96.4 81.7,108.4" fill="#4a84b8"/><polygon points="81.7,108.4 89.1,96.4 95.6,101.1 88.8,112.1" fill="#b5c4d4"/><polygon points="88.8,112.1 95.6,101.1 102.1,105.7 95.9,115.8" fill="#639acb"/><polygon points="95.9,115.8 102.1,105.7 108.3,111.8 102.8,119.1" fill="#5b94c8"/><polygon points="102.8,119.1 108.3,111.8 110.8,115.6 107.2,120.4" fill="#558cbd"/>
<polygon points="0.1,-10.7 5.5,-4.7 10.9,1.2 16.3,7.2 21.7,13.2 27.1,19.1 32.5,25.1 37.9,31.1 43.3,37.0 48.7,43.0 51.4,48.3 55.5,55.2 59.7,62.0 63.8,68.9 67.9,75.7 73.7,83.0 78.7,89.3 83.7,95.6 88.7,101.9 98.7,107.4 105.3,112.0 111.9,116.7 118.5,121.3 124.9,125.7 130.5,128.5 135.5,123.5 132.7,117.9 127.5,111.4 122.2,105.3 116.9,99.2 111.7,93.1 110.4,87.4 106.6,80.3 102.7,73.3 98.8,66.3 96.4,59.8 92.7,52.7 89.1,45.6 85.4,38.5 81.8,31.4 75.7,23.3 71.6,16.4 67.6,9.4 63.6,2.5 59.5,-4.5 55.5,-11.5 51.5,-18.4 47.4,-25.4 43.4,-32.3 39.4,-39.3" fill="#2a9a3e"/><polygon points="0.1,-10.7 39.4,-39.3 43.4,-32.3 5.5,-4.7" fill="#2c8241"/><polygon points="5.5,-4.7 43.4,-32.3 47.4,-25.4 10.9,1.2" fill="#1a6a2d"/><polygon points="10.9,1.2 47.4,-25.4 51.5,-18.4 16.3,7.2" fill="#33a847"/><polygon points="16.3,7.2 51.5,-18.4 55.5,-11.5 21.7,13.2" fill="#3dad50"/><polygon points="21.7,13.2 55.5,-11.5 59.5,-4.5 27.1,19.1" fill="#36ab4a"/><polygon points="27.1,19.1 59.5,-4.5 63.6,2.5 32.5,25.1" fill="#258736"/><polygon points="32.5,25.1 63.6,2.5 67.6,9.4 37.9,31.1" fill="#207b33"/><polygon points="37.9,31.1 67.6,9.4 71.6,16.4 43.3,37.0" fill="#2e9740"/><polygon points="43.3,37.0 71.6,16.4 75.7,23.3 48.7,43.0" fill="#228537"/><polygon points="48.7,43.0 75.7,23.3 81.8,31.4 51.4,48.3" fill="#369f48"/><polygon points="51.4,48.3 81.8,31.4 85.4,38.5 55.5,55.2" fill="#30a043"/><polygon points="55.5,55.2 85.4,38.5 89.1,45.6 59.7,62.0" fill="#36aa49"/><polygon points="59.7,62.0 89.1,45.6 92.7,52.7 63.8,68.9" fill="#1f7732"/><polygon points="63.8,68.9 92.7,52.7 96.4,59.8 67.9,75.7" fill="#40a452"/><polygon points="67.9,75.7 96.4,59.8 98.8,66.3 73.7,83.0" fill="#2c8e41"/><polygon points="73.7,83.0 98.8,66.3 102.7,73.3 78.7,89.3" fill="#248535"/><polygon points="78.7,89.3 102.7,73.3 106.6,80.3 83.7,95.6" fill="#39ac4c"/><polygon points="83.7,95.6 106.6,80.3 110.4,87.4 88.7,101.9" fill="#217f35"/><polygon points="88.7,101.9 110.4,87.4 111.7,93.1 98.7,107.4" fill="#37944b"/><polygon points="98.7,107.4 111.7,93.1 116.9,99.2 105.3,112.0" fill="#2c913d"/><polygon points="105.3,112.0 116.9,99.2 122.2,105.3 111.9,116.7" fill="#228236"/><polygon points="111.9,116.7 122.2,105.3 127.5,111.4 118.5,121.3" fill="#29973c"/><polygon points="118.5,121.3 127.5,111.4 132.7,117.9 124.9,125.7" fill="#2a813f"/><polygon points="124.9,125.7 132.7,117.9 135.5,123.5 130.5,128.5" fill="#29803e"/>
<polygon points="33.1,-13.2 37.8,-6.7 42.4,-0.1 47.1,6.4 51.7,13.0 56.4,19.5 61.1,26.1 65.7,32.6 70.4,39.2 74.4,45.3 79.0,51.9 83.6,58.6 88.3,65.2 92.9,71.8 97.3,78.4 101.3,85.3 105.4,92.2 109.4,99.1 115.1,106.1 120.0,112.4 125.0,118.8 129.9,125.1 129.9,125.1 140.1,118.9 140.1,118.9 136.6,111.6 133.2,104.3 129.8,97.0 127.2,90.2 124.1,82.8 121.0,75.4 117.9,68.1 115.0,60.4 112.3,52.8 109.7,45.2 107.0,37.6 104.3,29.9 100.4,22.1 97.2,14.8 93.9,7.4 90.7,0.1 87.5,-7.3 84.2,-14.7 81.0,-22.0 77.8,-29.4 74.5,-36.8" fill="#3a7ab6"/><polygon points="33.1,-13.2 74.5,-36.8 77.8,-29.4 37.8,-6.7" fill="#4693c6"/><polygon points="37.8,-6.7 77.8,-29.4 81.0,-22.0 42.4,-0.1" fill="#4086b5"/><polygon points="42.4,-0.1 81.0,-22.0 84.2,-14.7 47.1,6.4" fill="#4693c7"/><polygon points="47.1,6.4 84.2,-14.7 87.5,-7.3 51.7,13.0" fill="#3c6899"/><polygon points="51.7,13.0 87.5,-7.3 90.7,0.1 56.4,19.5" fill="#59a2d3"/><polygon points="56.4,19.5 90.7,0.1 93.9,7.4 61.1,26.1" fill="#326094"/><polygon points="61.1,26.1 93.9,7.4 97.2,14.8 65.7,32.6" fill="#315f93"/><polygon points="65.7,32.6 97.2,14.8 100.4,22.1 70.4,39.2" fill="#5da4d5"/><polygon points="70.4,39.2 100.4,22.1 104.3,29.9 74.4,45.3" fill="#a79940"/><polygon points="74.4,45.3 104.3,29.9 107.0,37.6 79.0,51.9" fill="#afa043"/><polygon points="79.0,51.9 107.0,37.6 109.7,45.2 83.6,58.6" fill="#a3963f"/><polygon points="83.6,58.6 109.7,45.2 112.3,52.8 88.3,65.2" fill="#b0a244"/><polygon points="88.3,65.2 112.3,52.8 115.0,60.4 92.9,71.8" fill="#336ca1"/><polygon points="92.9,71.8 115.0,60.4 117.9,68.1 97.3,78.4" fill="#2d5c91"/><polygon points="97.3,78.4 117.9,68.1 121.0,75.4 101.3,85.3" fill="#406b9b"/><polygon points="101.3,85.3 121.0,75.4 124.1,82.8 105.4,92.2" fill="#3876b1"/><polygon points="105.4,92.2 124.1,82.8 127.2,90.2 109.4,99.1" fill="#4693c7"/><polygon points="109.4,99.1 127.2,90.2 129.8,97.0 115.1,106.1" fill="#4087b6"/><polygon points="115.1,106.1 129.8,97.0 133.2,104.3 120.0,112.4" fill="#4085b4"/><polygon points="120.0,112.4 133.2,104.3 136.6,111.6 125.0,118.8" fill="#5089be"/><polygon points="125.0,118.8 136.6,111.6 140.1,118.9 129.9,125.1" fill="#4289b9"/><polygon points="129.9,125.1 140.1,118.9 140.1,118.9 129.9,125.1" fill="#2c5c91"/>
<polygon points="76.0,-17.6 79.2,-10.3 82.4,-2.9 85.5,4.4 88.7,11.8 91.9,19.1 95.1,26.5 98.3,33.8 101.5,41.2 103.3,46.9 106.4,54.4 109.4,61.9 112.4,69.4 115.7,77.2 118.8,84.6 122.0,92.1 125.8,100.3 129.6,107.4 133.4,114.5 137.3,121.6 141.0,128.4 153.0,123.6 151.0,116.1 148.9,108.3 146.8,100.5 144.6,92.8 143.9,85.7 142.5,77.7 141.2,69.8 140.4,62.2 139.4,54.2 138.5,46.2 137.5,38.1 134.9,28.5 132.4,20.9 130.0,13.3 127.5,5.7 125.0,-1.9 122.5,-9.5 120.0,-17.2 117.6,-24.8 115.1,-32.4" fill="#c47252"/><polygon points="76.0,-17.6 115.1,-32.4 117.6,-24.8 79.2,-10.3" fill="#a66045"/><polygon points="79.2,-10.3 117.6,-24.8 120.0,-17.2 82.4,-2.9" fill="#a7593f"/><polygon points="82.4,-2.9 120.0,-17.2 122.5,-9.5 85.5,4.4" fill="#d0856a"/><polygon points="85.5,4.4 122.5,-9.5 125.0,-1.9 88.7,11.8" fill="#c97e60"/><polygon points="88.7,11.8 125.0,-1.9 127.5,5.7 91.9,19.1" fill="#a35a41"/><polygon points="91.9,19.1 127.5,5.7 130.0,13.3 95.1,26.5" fill="#d59178"/><polygon points="95.1,26.5 130.0,13.3 132.4,20.9 98.3,33.8" fill="#cb8165"/><polygon points="98.3,33.8 132.4,20.9 134.9,28.5 101.5,41.2" fill="#c87d5f"/><polygon points="101.5,41.2 134.9,28.5 137.5,38.1 103.3,46.9" fill="#b46348"/><polygon points="103.3,46.9 137.5,38.1 138.5,46.2 106.4,54.4" fill="#b5735a"/><polygon points="106.4,54.4 138.5,46.2 139.4,54.2 109.4,61.9" fill="#c7795b"/><polygon points="109.4,61.9 139.4,54.2 140.4,62.2 112.4,69.4" fill="#cb8165"/><polygon points="112.4,69.4 140.4,62.2 141.2,69.8 115.7,77.2" fill="#a6593f"/><polygon points="115.7,77.2 141.2,69.8 142.5,77.7 118.8,84.6" fill="#b16b54"/><polygon points="118.8,84.6 142.5,77.7 143.9,85.7 122.0,92.1" fill="#b9755c"/><polygon points="122.0,92.1 143.9,85.7 144.6,92.8 125.8,100.3" fill="#c7795b"/><polygon points="125.8,100.3 144.6,92.8 146.8,100.5 129.6,107.4" fill="#d59279"/><polygon points="129.6,107.4 146.8,100.5 148.9,108.3 133.4,114.5" fill="#c67758"/><polygon points="133.4,114.5 148.9,108.3 151.0,116.1 137.3,121.6" fill="#cd8266"/><polygon points="137.3,121.6 151.0,116.1 153.0,123.6 141.0,128.4" fill="#9e553c"/>
<polygon points="123.4,-23.5 124.3,-15.6 125.1,-7.6 126.0,0.3 126.9,8.3 127.7,16.2 128.6,24.2 129.4,32.2 130.8,41.1 133.1,48.8 135.3,56.6 137.6,64.3 139.8,72.1 141.6,80.0 143.2,87.8 144.8,95.7 146.9,103.6 148.9,111.4 151.0,119.1 153.1,126.9 154.2,131.0 166.8,129.0 166.6,124.7 166.1,116.7 165.6,108.7 165.1,100.6 164.6,92.8 164.0,84.8 163.3,76.8 162.8,68.8 162.7,60.7 162.7,52.7 162.7,44.6 162.7,36.5 162.6,29.5 162.1,21.5 161.7,13.5 161.3,5.5 160.8,-2.5 160.4,-10.5 160.0,-18.5 159.5,-26.5" fill="#7b55c6"/><polygon points="123.4,-23.5 159.5,-26.5 160.0,-18.5 124.3,-15.6" fill="#6943ae"/><polygon points="124.3,-15.6 160.0,-18.5 160.4,-10.5 125.1,-7.6" fill="#906dd1"/><polygon points="125.1,-7.6 160.4,-10.5 160.8,-2.5 126.0,0.3" fill="#7450b5"/><polygon points="126.0,0.3 160.8,-2.5 161.3,5.5 126.9,8.3" fill="#7a58bf"/><polygon points="126.9,8.3 161.3,5.5 161.7,13.5 127.7,16.2" fill="#5f3d9f"/><polygon points="127.7,16.2 161.7,13.5 162.1,21.5 128.6,24.2" fill="#6d4bb1"/><polygon points="128.6,24.2 162.1,21.5 162.6,29.5 129.4,32.2" fill="#8a68cc"/><polygon points="129.4,32.2 162.6,29.5 162.7,36.5 130.8,41.1" fill="#8a67cb"/><polygon points="130.8,41.1 162.7,36.5 162.7,44.6 133.1,48.8" fill="#6f4ab2"/><polygon points="133.1,48.8 162.7,44.6 162.7,52.7 135.3,56.6" fill="#8966c9"/><polygon points="135.3,56.6 162.7,52.7 162.7,60.7 137.6,64.3" fill="#9a7ad5"/><polygon points="137.6,64.3 162.7,60.7 162.8,68.8 139.8,72.1" fill="#7b5cb5"/><polygon points="139.8,72.1 162.8,68.8 163.3,76.8 141.6,80.0" fill="#704db4"/><polygon points="141.6,80.0 163.3,76.8 164.0,84.8 143.2,87.8" fill="#6340a5"/><polygon points="143.2,87.8 164.0,84.8 164.6,92.8 144.8,95.7" fill="#7653bd"/><polygon points="144.8,95.7 164.6,92.8 165.1,100.6 146.9,103.6" fill="#7853c1"/><polygon points="146.9,103.6 165.1,100.6 165.6,108.7 148.9,111.4" fill="#9573d3"/><polygon points="148.9,111.4 165.6,108.7 166.1,116.7 151.0,119.1" fill="#8461ca"/><polygon points="151.0,119.1 166.1,116.7 166.6,124.7 153.1,126.9" fill="#8765cb"/><polygon points="153.1,126.9 166.6,124.7 166.8,129.0 154.2,131.0" fill="#6742ac"/>
<polygon points="167.0,-25.5 167.0,-17.5 167.0,-9.5 167.0,-1.5 167.0,6.5 167.0,14.6 167.0,22.6 167.0,30.6 167.3,36.6 166.8,44.6 166.3,52.7 165.8,60.7 165.4,68.7 165.3,77.8 165.6,85.9 166.0,93.9 166.1,101.6 166.1,109.6 166.1,117.7 166.1,125.7 166.1,129.4 177.9,130.6 178.7,127.0 180.3,119.1 181.9,111.2 183.6,103.4 185.2,95.1 186.5,87.2 187.9,79.2 189.1,72.4 191.1,64.6 193.1,56.9 195.1,49.1 197.1,41.3 198.3,31.4 198.7,23.4 199.2,15.4 199.6,7.4 200.0,-0.6 200.5,-8.6 200.9,-16.5 201.3,-24.5" fill="#c86e4c"/><polygon points="167.0,-25.5 201.3,-24.5 200.9,-16.5 167.0,-17.5" fill="#aa573a"/><polygon points="167.0,-17.5 200.9,-16.5 200.5,-8.6 167.0,-9.5" fill="#b9755c"/><polygon points="167.0,-9.5 200.5,-8.6 200.0,-0.6 167.0,-1.5" fill="#b76144"/><polygon points="167.0,-1.5 200.0,-0.6 199.6,7.4 167.0,6.5" fill="#ca7454"/><polygon points="167.0,6.5 199.6,7.4 199.2,15.4 167.0,14.6" fill="#b96d53"/><polygon points="167.0,14.6 199.2,15.4 198.7,23.4 167.0,22.6" fill="#b26143"/><polygon points="167.0,22.6 198.7,23.4 198.3,31.4 167.0,30.6" fill="#c06e52"/><polygon points="167.0,30.6 198.3,31.4 197.1,41.3 167.3,36.6" fill="#b15c3e"/><polygon points="167.3,36.6 197.1,41.3 195.1,49.1 166.8,44.6" fill="#bd684b"/><polygon points="166.8,44.6 195.1,49.1 193.1,56.9 166.3,52.7" fill="#bd775e"/><polygon points="166.3,52.7 193.1,56.9 191.1,64.6 165.8,60.7" fill="#964d33"/><polygon points="165.8,60.7 191.1,64.6 189.1,72.4 165.4,68.7" fill="#c66d4b"/><polygon points="165.4,68.7 189.1,72.4 187.9,79.2 165.3,77.8" fill="#aa573a"/><polygon points="165.3,77.8 187.9,79.2 186.5,87.2 165.6,85.9" fill="#b5664a"/><polygon points="165.6,85.9 186.5,87.2 185.2,95.1 166.0,93.9" fill="#964d33"/><polygon points="166.0,93.9 185.2,95.1 183.6,103.4 166.1,101.6" fill="#a35337"/><polygon points="166.1,101.6 183.6,103.4 181.9,111.2 166.1,109.6" fill="#b46346"/><polygon points="166.1,109.6 181.9,111.2 180.3,119.1 166.1,117.7" fill="#c37b61"/><polygon points="166.1,117.7 180.3,119.1 178.7,127.0 166.1,125.7" fill="#c16f53"/><polygon points="166.1,125.7 178.7,127.0 177.9,130.6 166.1,129.4" fill="#cd7b5d"/>
<polygon points="201.5,-30.2 201.1,-22.1 200.6,-14.0 200.1,-5.9 199.6,2.2 199.1,10.3 198.6,18.4 198.1,26.5 198.2,33.4 195.6,40.9 193.1,48.5 190.5,56.1 187.9,63.6 185.3,71.8 183.7,79.7 182.0,87.5 180.5,95.3 179.0,103.2 177.6,111.1 176.2,119.1 175.6,121.9 189.4,126.1 190.5,123.4 193.7,116.0 196.9,108.7 200.1,101.3 203.1,93.7 206.0,86.2 208.8,78.7 211.1,71.6 213.7,64.1 216.3,56.5 218.9,48.9 221.5,41.4 225.3,32.7 228.4,25.2 231.5,17.7 234.6,10.2 237.7,2.7 240.8,-4.8 243.8,-12.3 246.9,-19.8" fill="#3a8ecc"/><polygon points="201.5,-30.2 246.9,-19.8 243.8,-12.3 201.1,-22.1" fill="#3d77b0"/><polygon points="201.1,-22.1 243.8,-12.3 240.8,-4.8 200.6,-14.0" fill="#57a6da"/><polygon points="200.6,-14.0 240.8,-4.8 237.7,2.7 200.1,-5.9" fill="#cec24b"/><polygon points="200.1,-5.9 237.7,2.7 234.6,10.2 199.6,2.2" fill="#4a97d0"/><polygon points="199.6,2.2 234.6,10.2 231.5,17.7 199.1,10.3" fill="#d0c44e"/><polygon points="199.1,10.3 231.5,17.7 228.4,25.2 198.6,18.4" fill="#baaf44"/><polygon points="198.6,18.4 228.4,25.2 225.3,32.7 198.1,26.5" fill="#4da1d8"/><polygon points="198.1,26.5 225.3,32.7 221.5,41.4 198.2,33.4" fill="#3a8ecc"/><polygon points="198.2,33.4 221.5,41.4 218.9,48.9 195.6,40.9" fill="#316faa"/><polygon points="195.6,40.9 218.9,48.9 216.3,56.5 193.1,48.5" fill="#55a5da"/><polygon points="193.1,48.5 216.3,56.5 213.7,64.1 190.5,56.1" fill="#4b97d0"/><polygon points="190.5,56.1 213.7,64.1 211.1,71.6 187.9,63.6" fill="#3582bb"/><polygon points="187.9,63.6 211.1,71.6 208.8,78.7 185.3,71.8" fill="#245b90"/><polygon points="185.3,71.8 208.8,78.7 206.0,86.2 183.7,79.7" fill="#398cc9"/><polygon points="183.7,79.7 206.0,86.2 203.1,93.7 182.0,87.5" fill="#4494ce"/><polygon points="182.0,87.5 203.1,93.7 200.1,101.3 180.5,95.3" fill="#3889c5"/><polygon points="180.5,95.3 200.1,101.3 196.9,108.7 179.0,103.2" fill="#d1c652"/><polygon points="179.0,103.2 196.9,108.7 193.7,116.0 177.6,111.1" fill="#499dd5"/><polygon points="177.6,111.1 193.7,116.0 190.5,123.4 176.2,119.1" fill="#499dd5"/><polygon points="176.2,119.1 190.5,123.4 189.4,126.1 175.6,121.9" fill="#d1c652"/>
<polygon points="256.2,-32.1 251.9,-25.4 247.5,-18.6 243.1,-11.9 238.7,-5.2 234.4,1.5 230.0,8.2 225.6,14.9 221.2,21.7 216.5,28.8 213.7,36.4 211.0,44.0 208.3,51.6 205.6,59.3 202.6,67.0 199.5,74.4 196.4,81.8 193.3,89.2 190.5,97.5 188.6,105.4 186.6,113.3 185.2,119.1 198.8,124.9 202.0,119.8 206.3,112.9 210.6,106.1 214.3,99.7 218.3,92.8 222.4,85.9 226.4,79.0 230.8,72.6 235.6,66.1 240.4,59.5 245.1,53.0 249.9,46.5 253.0,39.7 256.5,32.5 260.0,25.3 263.5,18.1 267.1,10.9 270.6,3.7 274.1,-3.5 277.6,-10.7 281.1,-17.9" fill="#2c9c44"/><polygon points="256.2,-32.1 281.1,-17.9 277.6,-10.7 251.9,-25.4" fill="#4fb761"/><polygon points="251.9,-25.4 277.6,-10.7 274.1,-3.5 247.5,-18.6" fill="#2f8945"/><polygon points="247.5,-18.6 274.1,-3.5 270.6,3.7 243.1,-11.9" fill="#1c7b33"/><polygon points="243.1,-11.9 270.6,3.7 267.1,10.9 238.7,-5.2" fill="#288b3e"/><polygon points="238.7,-5.2 267.1,10.9 263.5,18.1 234.4,1.5" fill="#329f49"/><polygon points="234.4,1.5 263.5,18.1 260.0,25.3 230.0,8.2" fill="#247d37"/><polygon points="230.0,8.2 260.0,25.3 256.5,32.5 225.6,14.9" fill="#48b45a"/><polygon points="225.6,14.9 256.5,32.5 253.0,39.7 221.2,21.7" fill="#358d4a"/><polygon points="221.2,21.7 253.0,39.7 249.9,46.5 216.5,28.8" fill="#359c47"/><polygon points="216.5,28.8 249.9,46.5 245.1,53.0 213.7,36.4" fill="#378e4c"/><polygon points="213.7,36.4 245.1,53.0 240.4,59.5 211.0,44.0" fill="#298640"/><polygon points="211.0,44.0 240.4,59.5 235.6,66.1 208.3,51.6" fill="#2a9541"/><polygon points="208.3,51.6 235.6,66.1 230.8,72.6 205.6,59.3" fill="#258039"/><polygon points="205.6,59.3 230.8,72.6 226.4,79.0 202.6,67.0" fill="#1a7230"/><polygon points="202.6,67.0 226.4,79.0 222.4,85.9 199.5,74.4" fill="#439d56"/><polygon points="199.5,74.4 222.4,85.9 218.3,92.8 196.4,81.8" fill="#27873c"/><polygon points="196.4,81.8 218.3,92.8 214.3,99.7 193.3,89.2" fill="#1c7933"/><polygon points="193.3,89.2 214.3,99.7 210.6,106.1 190.5,97.5" fill="#35a04c"/><polygon points="190.5,97.5 210.6,106.1 206.3,112.9 188.6,105.4" fill="#299240"/><polygon points="188.6,105.4 206.3,112.9 202.0,119.8 186.6,113.3" fill="#288b3e"/><polygon points="186.6,113.3 202.0,119.8 198.8,124.9 185.2,119.1" fill="#299440"/>
<polygon points="297.9,-33.4 292.8,-27.3 287.6,-21.2 282.5,-15.0 277.3,-8.9 272.2,-2.8 267.1,3.4 261.9,9.5 256.8,15.6 251.6,21.8 245.4,28.2 240.3,36.7 237.5,44.2 234.6,51.7 231.7,59.3 228.8,66.8 225.2,74.0 221.6,81.1 218.0,88.3 217.1,94.5 213.5,100.5 220.5,107.5 226.5,103.9 235.3,97.6 239.3,90.7 243.3,83.8 247.4,76.9 252.1,70.4 256.9,63.8 261.6,57.3 266.4,50.8 269.0,45.3 273.0,39.3 278.0,33.1 283.1,26.9 288.1,20.7 293.1,14.5 298.2,8.3 303.2,2.1 308.2,-4.1 313.3,-10.4 318.3,-16.6" fill="#a0c0de"/><polygon points="297.9,-33.4 318.3,-16.6 313.3,-10.4 292.8,-27.3" fill="#6898c5"/><polygon points="292.8,-27.3 313.3,-10.4 308.2,-4.1 287.6,-21.2" fill="#8ca9c3"/><polygon points="287.6,-21.2 308.2,-4.1 303.2,2.1 282.5,-15.0" fill="#d5dee8"/><polygon points="282.5,-15.0 303.2,2.1 298.2,8.3 277.3,-8.9" fill="#8ba7c1"/><polygon points="277.3,-8.9 298.2,8.3 293.1,14.5 272.2,-2.8" fill="#5b84ac"/><polygon points="272.2,-2.8 293.1,14.5 288.1,20.7 267.1,3.4" fill="#bfc9d4"/><polygon points="267.1,3.4 288.1,20.7 283.1,26.9 261.9,9.5" fill="#d3dce7"/><polygon points="261.9,9.5 283.1,26.9 278.0,33.1 256.8,15.6" fill="#6593bf"/><polygon points="256.8,15.6 278.0,33.1 273.0,39.3 251.6,21.8" fill="#abc6e1"/><polygon points="251.6,21.8 273.0,39.3 269.0,45.3 245.4,28.2" fill="#94b1cd"/><polygon points="245.4,28.2 269.0,45.3 266.4,50.8 240.3,36.7" fill="#c8d2dd"/><polygon points="240.3,36.7 266.4,50.8 261.6,57.3 237.5,44.2" fill="#93b1cc"/><polygon points="237.5,44.2 261.6,57.3 256.9,63.8 234.6,51.7" fill="#a2c1de"/><polygon points="234.6,51.7 256.9,63.8 252.1,70.4 231.7,59.3" fill="#5c86ae"/><polygon points="231.7,59.3 252.1,70.4 247.4,76.9 228.8,66.8" fill="#b4bdc7"/><polygon points="228.8,66.8 247.4,76.9 243.3,83.8 225.2,74.0" fill="#9bbad7"/><polygon points="225.2,74.0 243.3,83.8 239.3,90.7 221.6,81.1" fill="#7ba5ce"/><polygon points="221.6,81.1 239.3,90.7 235.3,97.6 218.0,88.3" fill="#b0c9e3"/><polygon points="218.0,88.3 235.3,97.6 226.5,103.9 217.1,94.5" fill="#6c9bc8"/><polygon points="217.1,94.5 226.5,103.9 220.5,107.5 213.5,100.5" fill="#9ebedc"/>

<g fill="#111"><rect x="161" y="0" width="6" height="60"/></g>
<g fill="#d8d8d8"><rect x="161" y="8" width="6" height="1.5"/><rect x="161" y="20" width="6" height="1.5"/><rect x="161" y="32" width="6" height="1.5"/><rect x="161" y="44" width="6" height="1.5"/></g>
</svg>

<div class="t" style="left:1141.5px;top:574.5px;font-size:12.4px;font-weight:700;color:#e86833">Change</div>
<div class="t" style="left:1201px;top:574.5px;font-size:12.2px;font-weight:700;color:#e86833">Remove</div>
<div class="card" style="left:932px;top:617px;width:322px;height:100px"></div>
<div class="t" style="left:947px;top:636px;font-size:14px;color:#6b6f83">Embedded Product Card</div>
<div class="abs" style="left:1255px;top:607px;width:42px;height:42px;border-radius:50%;background:#e86833;box-shadow:0 1px 6px rgba(0,0,0,.18)"></div>
<svg class="abs" style="left:1265px;top:616px" width="24" height="24" viewBox="0 0 24 24">
  <path d="M4.5 2 H18.8 Q20.8 2 20.8 4 V22.8 L17 20.7 H4.5 Q2.5 20.7 2.5 18.7 V4 Q2.5 2 4.5 2 Z" fill="#fff"/>
  <path d="M5.4 14.6 Q11.6 18.6 17.9 14.6" stroke="#e86833" stroke-width="1.3" fill="none" stroke-linecap="round"/>
</svg>
<!-- annotation -->
<div class="abs" style="left:810px;top:276.5px;width:30.5px;height:31px;border:4.3px solid #f42a0a;border-radius:11px"></div>
<svg class="abs" style="left:0;top:0" width="1300" height="656">
  <line x1="492" y1="371.5" x2="781" y2="302.5" stroke="#f62a06" stroke-width="5"/>
  <polygon points="777,293.5 782,313.5 800.5,298.5" fill="#f62a06"/>
</svg>
</body></html>
